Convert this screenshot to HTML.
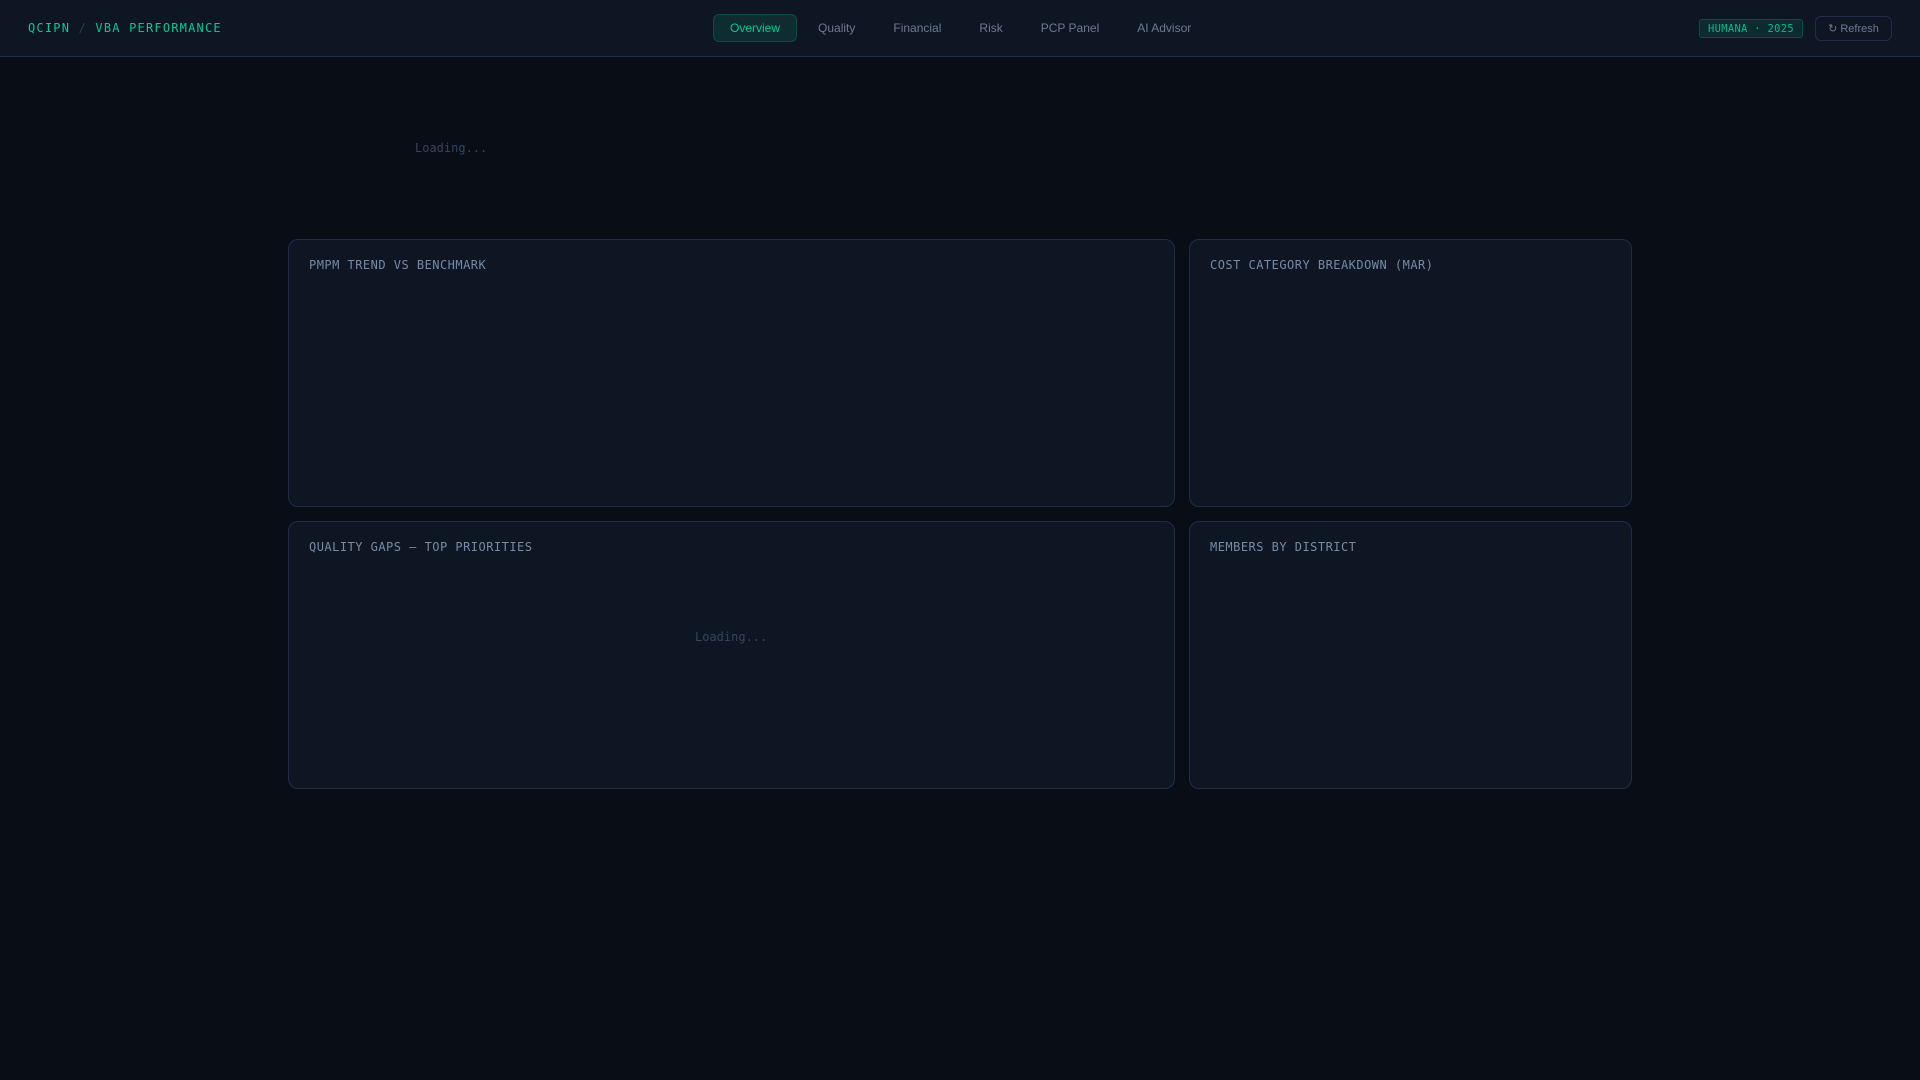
<!DOCTYPE html>
<html lang="en">
<head>
<meta charset="utf-8">
<title>QCIPN / VBA Performance</title>
<style>
*{box-sizing:border-box;margin:0;padding:0}
html,body{width:1920px;height:1080px;overflow:hidden;background:#090d16;font-family:"Liberation Sans",sans-serif}
.mono{font-family:"DejaVu Sans Mono",monospace}
header{position:absolute;left:0;top:0;width:1920px;height:57px;background:#0f1623;border-bottom:1px solid #1e2d4a}
.logo{position:absolute;left:28px;top:21px;font-size:12px;line-height:14px;letter-spacing:1.2px;color:#00c896;white-space:pre}
.logo span{color:#2a3a52}
nav{position:absolute;left:713px;top:14px;display:flex;gap:4px}
nav a{display:block;height:28px;padding:0 16px;font-size:12px;line-height:26px;color:#6b7a90;border:1px solid transparent;border-radius:6px}
nav a.on{color:#00c896;background:#0f2c30;border-color:#0c4c48}
.badge{position:absolute;left:1699px;top:19px;width:104px;height:19px;font-size:10.5px;line-height:18px;letter-spacing:.3px;color:#00bc8e;background:#0b2b2e;border:1px solid #0c4c48;border-radius:3px;text-align:center;white-space:pre}
.refresh{position:absolute;left:1815px;top:16px;width:77px;height:25px;font-size:11px;line-height:25px;color:#6b7a90;border:1px solid #1e2d4a;border-radius:6px;text-align:center;white-space:pre}
.card{position:absolute;background:#0f1623;border:1px solid #1e2d4a;border-radius:10px;height:268px}
.c1{left:288px;width:887px}
.c2{left:1189px;width:443px}
.r1{top:239px}
.r2{top:521px}
.t{position:absolute;left:20px;top:18px;font-size:12px;line-height:14px;letter-spacing:.48px;color:#748aa6;white-space:pre}
.load{position:absolute;font-size:12px;line-height:14px;color:#30465f;white-space:pre}
</style>
</head>
<body>
<header>
  <div class="logo mono">QCIPN <span>/</span> VBA PERFORMANCE</div>
  <nav>
    <a class="on">Overview</a>
    <a>Quality</a>
    <a>Financial</a>
    <a>Risk</a>
    <a>PCP Panel</a>
    <a>AI Advisor</a>
  </nav>
  <div class="badge mono">HUMANA · 2025</div>
  <div class="refresh">↻ Refresh</div>
</header>
<div class="load mono" style="left:415px;top:141px">Loading...</div>
<div class="card c1 r1"><div class="t mono">PMPM TREND VS BENCHMARK</div></div>
<div class="card c2 r1"><div class="t mono">COST CATEGORY BREAKDOWN (MAR)</div></div>
<div class="card c1 r2"><div class="t mono">QUALITY GAPS — TOP PRIORITIES</div>
  <div class="load mono" style="left:406px;top:108px">Loading...</div></div>
<div class="card c2 r2"><div class="t mono">MEMBERS BY DISTRICT</div></div>
</body>
</html>
